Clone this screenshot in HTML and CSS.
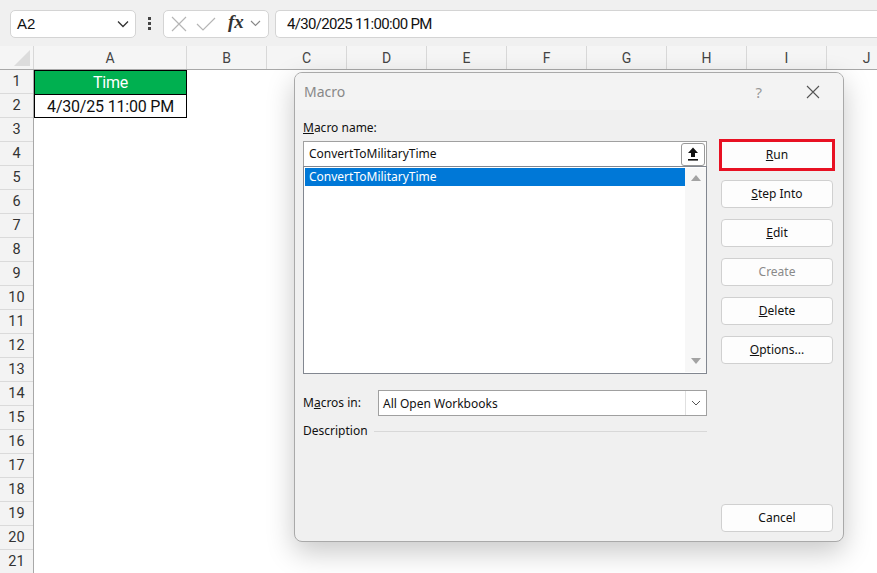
FILE: index.html
```html
<!DOCTYPE html>
<html lang="en">
<head>
    <meta charset="UTF-8">
    <meta name="viewport" content="width=device-width, initial-scale=1.0">
    <title>Macro</title>
    <link rel="stylesheet" href="styles.css">
</head>
<body>
    <div class="app">
        <div class="formula-bar">
            <div class="name-box">
                <span>A2</span>
                <svg width="12" height="8" viewBox="0 0 12 8"><path d="M1 1.5 L6 6.5 L11 1.5" fill="none" stroke="#333" stroke-width="1.3"/></svg>
            </div>
            <div class="grip">
                <span></span><span></span><span></span>
            </div>
            <div class="fx-box">
                <svg width="16" height="16" viewBox="0 0 16 16"><path d="M1 1 L15 15 M15 1 L1 15" stroke="#b5b5b5" stroke-width="1.2"/></svg>
                <svg width="20" height="16" viewBox="0 0 20 16"><path d="M1 8 L7 14 L19 2" fill="none" stroke="#b5b5b5" stroke-width="1.2"/></svg>
                <span class="fx">fx</span>
                <svg width="11" height="7" viewBox="0 0 11 7"><path d="M1 1 L5.5 5.5 L10 1" fill="none" stroke="#888" stroke-width="1.1"/></svg>
            </div>
            <div class="formula-input">4/30/2025 11:00:00 PM</div>
        </div>

        <div class="sheet">
            <div class="col-headers">
                <div class="corner">
                    <svg width="16" height="16" viewBox="0 0 16 16"><path d="M16 0 L16 16 L0 16 Z" fill="#dcdcdc"/></svg>
                </div>
                <div class="col-head col-a">A</div>
                <div class="col-head">B</div>
                <div class="col-head">C</div>
                <div class="col-head">D</div>
                <div class="col-head">E</div>
                <div class="col-head">F</div>
                <div class="col-head">G</div>
                <div class="col-head">H</div>
                <div class="col-head">I</div>
                <div class="col-head">J</div>
            </div>
            <div class="sheet-body">
                <div class="row-headers">
                    <div>1</div><div>2</div><div>3</div><div>4</div><div>5</div>
                    <div>6</div><div>7</div><div>8</div><div>9</div><div>10</div>
                    <div>11</div><div>12</div><div>13</div><div>14</div><div>15</div>
                    <div>16</div><div>17</div><div>18</div><div>19</div><div>20</div>
                    <div>21</div>
                </div>
                <div class="cells">
                    <div class="cell head-cell">Time</div>
                    <div class="cell data-cell">4/30/25 11:00 PM</div>
                </div>
            </div>
        </div>

        <div class="dialog">
            <div class="dialog-title">
                <span class="title-text">Macro</span>
                <span class="help">?</span>
                <svg class="close" width="14" height="14" viewBox="0 0 14 14"><path d="M1 1 L13 13 M13 1 L1 13" stroke="#555" stroke-width="1.1"/></svg>
            </div>
            <div class="dialog-body">
                <div class="left-col">
                    <div class="label"><u>M</u>acro name:</div>
                    <div class="name-input">
                        <span>ConvertToMilitaryTime</span>
                        <div class="up-btn">
                            <svg width="12" height="14" viewBox="0 0 12 14"><path d="M6 0.5 L11 6 L8 6 L8 10 L4 10 L4 6 L1 6 Z" fill="#111"/><rect x="1" y="12" width="10" height="1.6" fill="#111"/></svg>
                        </div>
                    </div>
                    <div class="list-box">
                        <div class="list-items">
                            <div class="list-item selected">ConvertToMilitaryTime</div>
                        </div>
                        <div class="scrollbar">
                            <svg width="10" height="6" viewBox="0 0 10 6"><path d="M5 0 L10 6 L0 6 Z" fill="#a3a3a3"/></svg>
                            <svg width="10" height="6" viewBox="0 0 10 6"><path d="M0 0 L10 0 L5 6 Z" fill="#a3a3a3"/></svg>
                        </div>
                    </div>
                    <div class="macros-in">
                        <span class="label">M<u>a</u>cros in:</span>
                        <div class="select">
                            <span>All Open Workbooks</span>
                            <div class="select-arrow">
                                <svg width="10" height="6" viewBox="0 0 10 6"><path d="M1 1 L5 5 L9 1" fill="none" stroke="#555" stroke-width="1"/></svg>
                            </div>
                        </div>
                    </div>
                    <div class="description">
                        <span class="label">Description</span>
                        <div class="rule"></div>
                    </div>
                </div>
                <div class="right-col">
                    <div class="btn run"><u>R</u>un</div>
                    <div class="btn"><u>S</u>tep Into</div>
                    <div class="btn"><u>E</u>dit</div>
                    <div class="btn disabled">Create</div>
                    <div class="btn"><u>D</u>elete</div>
                    <div class="btn"><u>O</u>ptions...</div>
                    <div class="btn cancel">Cancel</div>
                </div>
            </div>
        </div>
    </div>
</body>
</html>
```

FILE: styles.css
```css
* {
    margin: 0;
    padding: 0;
    box-sizing: border-box;
}
body {
    font-family: 'Noto Sans', 'Open Sans', sans-serif;
    background-color: #fff;
    overflow: hidden;
}
.app {
    width: 877px;
    height: 573px;
    position: relative;
    overflow: hidden;
}

/* formula bar */
.formula-bar {
    height: 46px;
    background-color: #f0f0f0;
    display: flex;
    align-items: center;
    padding-left: 10px;
    padding-top: 1px;
}
.name-box {
    width: 126px;
    height: 28px;
    background-color: #fff;
    border: 1px solid #d4d4d4;
    border-radius: 5px;
    display: flex;
    align-items: center;
    justify-content: space-between;
    padding: 0 6px 0 6px;
    font-family: 'Liberation Sans', sans-serif;
    font-size: 15px;
    color: #111;
}
.grip {
    width: 27px;
    display: flex;
    flex-direction: column;
    align-items: center;
    gap: 2px;
}
.grip span {
    width: 3px;
    height: 3px;
    background-color: #444;
}
.fx-box {
    width: 106px;
    height: 28px;
    background-color: #fff;
    border: 1px solid #d4d4d4;
    border-radius: 5px;
    display: flex;
    align-items: center;
    padding-left: 7px;
    gap: 9px;
}
.fx {
    font-family: 'Liberation Serif', serif;
    font-style: italic;
    font-weight: bold;
    font-size: 19px;
    color: #333;
    margin-left: 3px;
    margin-right: -3px;
    margin-top: -3px;
}
.formula-input {
    flex: 1;
    height: 28px;
    margin-left: 6px;
    background-color: #fff;
    border: 1px solid #d4d4d4;
    border-right: none;
    border-radius: 5px 0 0 5px;
    display: flex;
    align-items: center;
    padding-left: 11px;
    font-family: 'Roboto', sans-serif;
    font-size: 15px;
    letter-spacing: -0.7px;
    color: #111;
}

/* sheet */
.col-headers {
    display: flex;
    height: 24px;
    background-color: #f5f5f5;
    border-bottom: 1px solid #a8a8a8;
}
.corner {
    width: 34px;
    flex-shrink: 0;
    display: flex;
    align-items: flex-end;
    justify-content: flex-end;
    padding: 0 3px 3px 0;
    border-right: 1px solid #d8d8d8;
}
.col-head {
    width: 80px;
    flex-shrink: 0;
    text-align: center;
    font-family: 'Roboto', sans-serif;
    font-size: 14px;
    line-height: 24px;
    color: #444;
    border-right: 1px solid #d8d8d8;
}
.col-a {
    width: 153px;
}
.sheet-body {
    display: flex;
}
.row-headers {
    width: 34px;
    background-color: #f3f3f3;
    border-right: 1px solid #a8a8a8;
}
.row-headers div {
    height: 24px;
    border-bottom: 1px solid #dadada;
    text-align: center;
    font-family: 'Roboto', sans-serif;
    font-size: 14.5px;
    line-height: 23px;
    color: #333;
}
.cells {
    width: 153px;
}
.cell {
    height: 24px;
    text-align: center;
    font-family: 'Roboto', sans-serif;
    font-size: 16px;
    letter-spacing: -0.2px;
    line-height: 23px;
}
.head-cell {
    background-color: #00b050;
    color: #fff;
    border: 1px solid #000;
    border-bottom: none;
}
.data-cell {
    border: 1px solid #000;
    color: #111;
}

/* dialog */
.dialog {
    position: absolute;
    left: 294px;
    top: 72px;
    width: 550px;
    height: 470px;
    background-color: #f0f0f0;
    border: 1px solid #a9a9a9;
    border-radius: 8px;
    box-shadow: 0 10px 28px rgba(0, 0, 0, 0.22);
    overflow: hidden;
    font-size: 12px;
    color: #111;
}
.dialog-title {
    height: 37px;
    background-color: #f3f3f3;
    display: flex;
    align-items: center;
    padding-left: 9px;
}
.title-text {
    flex: 1;
    font-size: 14px;
    color: #888;
}
.help {
    font-size: 15px;
    color: #999;
    margin-right: 44px;
}
.close {
    margin-right: 23px;
}
.dialog-body {
    display: flex;
    padding: 10px 10px 0 8px;
    gap: 14px;
    height: 432px;
}
.left-col {
    width: 404px;
}
.label {
    line-height: 16px;
    color: #111;
}
.left-col > .label {
    margin-bottom: 5px;
}
.name-input {
    height: 25px;
    background-color: #fff;
    border: 1px solid #a0a0a0;
    border-bottom: none;
    display: flex;
    align-items: center;
    justify-content: space-between;
    padding: 0 1px 2px 5px;
}
.up-btn {
    width: 24px;
    height: 23px;
    margin-top: 2px;
    border: 1px solid #999;
    border-radius: 3px;
    display: flex;
    align-items: center;
    justify-content: center;
}
.list-box {
    height: 208px;
    background-color: #fff;
    border: 1px solid #828790;
    display: flex;
    padding: 1px 0 1px 1px;
}
.list-items {
    flex: 1;
}
.list-item {
    height: 18px;
    line-height: 18px;
    padding-left: 4px;
    color: #111;
}
.list-item.selected {
    background-color: #0078d7;
    color: #fff;
}
.scrollbar {
    width: 21px;
    background-color: #f7f7f7;
    display: flex;
    flex-direction: column;
    align-items: center;
    justify-content: space-between;
    padding: 7px 0 8px;
}
.macros-in {
    display: flex;
    align-items: center;
    margin-top: 16px;
}
.macros-in .label {
    width: 75px;
}
.select {
    flex: 1;
    height: 26px;
    background-color: #fff;
    border: 1px solid #a0a0a0;
    display: flex;
    align-items: center;
    justify-content: space-between;
    padding-left: 4px;
}
.select-arrow {
    width: 21px;
    height: 24px;
    border-left: 1px solid #e0e0e0;
    display: flex;
    align-items: center;
    justify-content: center;
}
.description {
    display: flex;
    align-items: center;
    margin-top: 7px;
    gap: 6px;
}
.rule {
    flex: 1;
    height: 1px;
    background-color: #d8d8d8;
}
.right-col {
    width: 112px;
    display: flex;
    flex-direction: column;
    gap: 11px;
    padding-top: 21px;
}
.btn {
    height: 28px;
    background-color: #fdfdfd;
    border: 1px solid #d0d0d0;
    border-radius: 4px;
    text-align: center;
    line-height: 26px;
    color: #111;
}
.btn.run {
    outline: 3px solid #e81123;
    outline-offset: -1px;
    border-color: #fff;
    border-radius: 0;
}
.btn.disabled {
    color: #8a8a8a;
}
.btn.cancel {
    margin-top: auto;
    margin-bottom: 10px;
}
```
